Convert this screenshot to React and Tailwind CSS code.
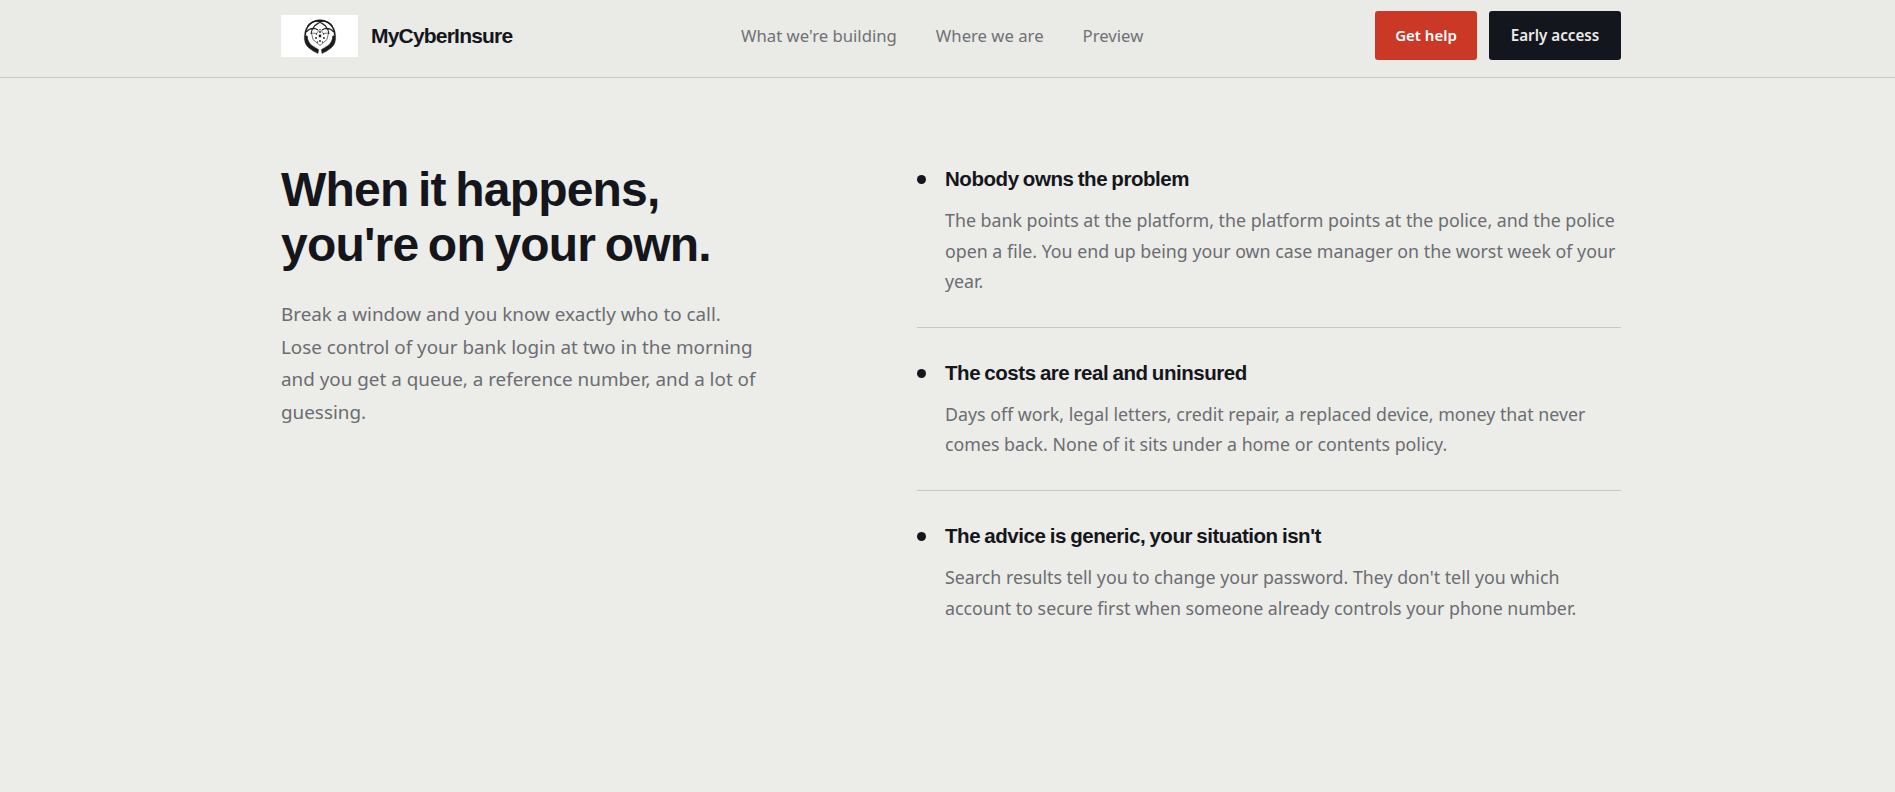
const items = [
  {
    title: "Nobody owns the problem",
    body: "The bank points at the platform, the platform points at the police, and the police open a file. You end up being your own case manager on the worst week of your year.",
  },
  {
    title: "The costs are real and uninsured",
    body: "Days off work, legal letters, credit repair, a replaced device, money that never comes back. None of it sits under a home or contents policy.",
  },
  {
    title: "The advice is generic, your situation isn't",
    body: "Search results tell you to change your password. They don't tell you which account to secure first when someone already controls your phone number.",
  },
];

function Logo() {
  return (
    <svg viewBox="0 0 34 36" className="w-[34px] h-[36px]" fill="none" stroke="#1c1c1c">
      <path d="M2.2 17 A14.8 14.8 0 1 1 31.8 17" strokeWidth="1.6" />
      <path d="M4.5 8 Q10 2 17 3 M8 16 Q9 6 21 2.6 M26 16 Q25 6 13 2.6 M29.5 8 Q24 2 17 3 M3 14 Q9 8 15 12 M31 14 Q25 8 19 12" strokeWidth="1.1" />
      <path d="M1.4 17 Q0.6 26 6 30 Q10 33.5 15 35.5 L15.6 31.5 Q12 29.5 9 27.5 Q4.6 24 4.4 18 Z" fill="#1c1c1c" strokeWidth="0.4" />
      <path d="M32.6 17 Q33.4 26 28 30 Q24 33.5 19 35.5 L18.4 31.5 Q22 29.5 25 27.5 Q29.4 24 29.6 18 Z" fill="#1c1c1c" strokeWidth="0.4" />
      <path d="M17 11 L20.5 15.5 L25.5 15 L24 21.5 L17 27.5 L10 21.5 L8.5 15 L13.5 15.5 Z" strokeWidth="0.6" />
      <g fill="#1c1c1c" stroke="none">
        <circle cx="17" cy="18" r="1.4" />
        <circle cx="13" cy="20" r="0.9" />
        <circle cx="21" cy="20" r="0.9" />
        <circle cx="17" cy="14" r="0.9" />
        <circle cx="17" cy="23" r="0.9" />
        <circle cx="13.5" cy="16" r="0.7" />
        <circle cx="20.5" cy="16" r="0.7" />
        <circle cx="14.5" cy="24" r="0.7" />
        <circle cx="19.5" cy="24" r="0.7" />
      </g>
    </svg>
  );
}

export default function App() {
  return (
    <div className="min-h-[792px] bg-[#ecece8] text-[#14161c] font-['Noto_Sans',sans-serif]">
      <header className="h-[78px] border-b border-[#c9c9c4] bg-[#eaeae6]">
        <div className="w-[1340px] ml-[281px] h-[71px] flex items-center">
          <a className="flex items-center gap-[13px] w-[460px]">
            <span className="w-[77px] h-[42px] bg-white flex items-center justify-center">
              <Logo />
            </span>
            <span className="font-['Liberation_Sans',sans-serif] font-bold text-[21px] tracking-[-0.8px] text-[#14161c]">MyCyberInsure</span>
          </a>
          <nav className="flex items-center gap-[39px] whitespace-nowrap text-[16.7px] text-[#6f7175]">
            <a>What we're building</a>
            <a>Where we are</a>
            <a>Preview</a>
          </nav>
          <div className="ml-auto flex items-center gap-3">
            <button className="w-[102px] h-[49px] rounded-[3px] bg-[#cc3826] text-white font-semibold text-[15px]">Get help</button>
            <button className="w-[132px] h-[49px] rounded-[3px] bg-[#14161e] text-[#ecece8] font-semibold text-[15.2px]">Early access</button>
          </div>
        </div>
      </header>
      <main className="w-[1340px] ml-[281px] grid grid-cols-[636px_704px] pt-[84px]">
        <section>
          <h1 className="font-['Liberation_Sans',sans-serif] font-bold text-[48px] leading-[55px] tracking-[-0.8px] [word-spacing:-3px] text-[#14161c]">
            When it happens,<br />you're on your own.
          </h1>
          <p className="mt-[26px] w-[480px] text-[18.85px] leading-[32.6px] text-[#6b6d72]">
            Break a window and you know exactly who to call. Lose control of your bank login at two in the morning and you get a queue, a reference number, and a lot of guessing.
          </p>
        </section>
        <ul className="pt-[3px]">
          {items.map((it, i) => (
            <li key={i} className={i < 2 ? "relative pl-[28px] pb-[30px] mb-[31px] border-b border-[#c9c9c4]" : "relative pl-[28px]"}>
              <span className="absolute left-0 top-[10px] w-[9px] h-[9px] rounded-full bg-[#14161c]" />
              <h3 className="font-['Liberation_Sans',sans-serif] font-bold text-[20.5px] leading-[28px] tracking-[-0.45px] [word-spacing:-1px] text-[#14161c]">{it.title}</h3>
              <p className="mt-[12px] text-[17.8px] leading-[30.6px] text-[#6b6d72]">{it.body}</p>
            </li>
          ))}
        </ul>
      </main>
    </div>
  );
}
